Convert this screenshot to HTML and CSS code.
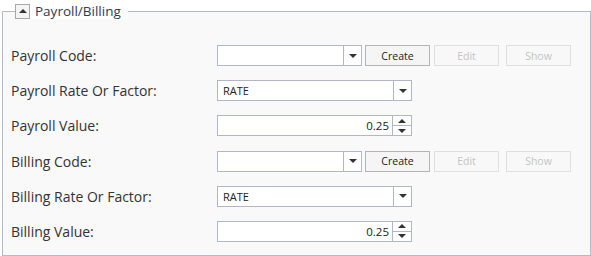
FILE: index.html
```html
<!DOCTYPE html>
<html lang="en">
<head>
  <meta charset="UTF-8" />
  <title>Payroll/Billing</title>
  <link rel="stylesheet" href="styles.css">
</head>
<body>
  <fieldset class="group">
    <legend>
      <span class="toggle"><span class="tri-up"></span></span>
      <span class="legend-text">Payroll/Billing</span>
    </legend>

    <div class="rows">
      <div class="row">
        <label>Payroll Code:</label>
        <div class="combo code">
          <span class="combo-value"></span>
          <span class="combo-btn"><span class="tri-down"></span></span>
        </div>
        <button class="btn">Create</button>
        <button class="btn" disabled>Edit</button>
        <button class="btn" disabled>Show</button>
      </div>

      <div class="row">
        <label>Payroll Rate Or Factor:</label>
        <div class="combo wide">
          <span class="combo-value">RATE</span>
          <span class="combo-btn"><span class="tri-down"></span></span>
        </div>
      </div>

      <div class="row">
        <label>Payroll Value:</label>
        <div class="spinner">
          <span class="spin-value">0.25</span>
          <span class="spin-btns">
            <span class="spin-up"><span class="tri-up"></span></span>
            <span class="spin-down"><span class="tri-down"></span></span>
          </span>
        </div>
      </div>

      <div class="row">
        <label>Billing Code:</label>
        <div class="combo code">
          <span class="combo-value"></span>
          <span class="combo-btn"><span class="tri-down"></span></span>
        </div>
        <button class="btn">Create</button>
        <button class="btn" disabled>Edit</button>
        <button class="btn" disabled>Show</button>
      </div>

      <div class="row">
        <label>Billing Rate Or Factor:</label>
        <div class="combo wide">
          <span class="combo-value">RATE</span>
          <span class="combo-btn"><span class="tri-down"></span></span>
        </div>
      </div>

      <div class="row">
        <label>Billing Value:</label>
        <div class="spinner">
          <span class="spin-value">0.25</span>
          <span class="spin-btns">
            <span class="spin-up"><span class="tri-up"></span></span>
            <span class="spin-down"><span class="tri-down"></span></span>
          </span>
        </div>
      </div>
    </div>
  </fieldset>
</body>
</html>
```

FILE: styles.css
```css
* {
  box-sizing: border-box;
}

body {
  margin: 0;
  padding: 3px 0 0 2px;
  background: #fff;
  font-family: 'Open Sans', sans-serif;
  color: #333;
  width: 591px;
  height: 256px;
}

.group {
  width: 589px;
  height: 253px;
  margin: 0;
  padding: 0 10px 12px 10px;
  border: 1px solid #b6b9ca;
  background: #f9f9f9;
}

.group legend {
  display: flex;
  align-items: center;
  padding: 0 7px 0 0;
  margin-left: 2px;
  background: #fff;
  height: 16px;
}

.toggle {
  width: 15px;
  height: 15px;
  border: 1px solid #a8a8a8;
  background: #f4f4f4;
  display: flex;
  align-items: center;
  justify-content: center;
  margin-right: 5px;
}

.legend-text {
  font-size: 13.5px;
  color: #2f3b55;
  line-height: 16px;
}

.tri-up {
  width: 0;
  height: 0;
  border-left: 4px solid transparent;
  border-right: 4px solid transparent;
  border-bottom: 4px solid #333;
}

.tri-down {
  width: 0;
  height: 0;
  border-left: 4px solid transparent;
  border-right: 4px solid transparent;
  border-top: 4px solid #333;
}

.rows {
  display: flex;
  flex-direction: column;
  gap: 14.2px;
  padding-top: 26px;
  margin-left: -2px;
}

.row {
  display: flex;
  align-items: center;
  height: 21px;
}

.row label {
  width: 206px;
  font-size: 14px;
  color: #333;
}

.combo, .spinner {
  display: flex;
  height: 21px;
  border: 1px solid #b3b6cb;
  background: #fff;
}

.combo.code {
  width: 145px;
}

.combo.wide, .spinner {
  width: 195px;
}

.combo-value {
  flex: 1;
  font-size: 11px;
  line-height: 19px;
  padding-left: 5px;
  color: #222;
}

.combo-btn {
  width: 18px;
  border-left: 1px solid #b3b6cb;
  display: flex;
  align-items: center;
  justify-content: center;
}

.spin-value {
  flex: 1;
  text-align: right;
  font-size: 11.5px;
  line-height: 19px;
  padding-right: 3px;
  color: #222;
}

.spin-btns {
  width: 19px;
  border-left: 1px solid #b3b6cb;
  display: flex;
  flex-direction: column;
}

.spin-up, .spin-down {
  flex: 1;
  display: flex;
  align-items: center;
  justify-content: center;
}

.spin-up {
  border-bottom: 1px solid #b3b6cb;
}

.btn {
  height: 21px;
  width: 65px;
  margin-left: 3px;
  font-family: 'Open Sans', sans-serif;
  font-size: 10.5px;
  color: #222;
  background: #f5f5f5;
  border: 1px solid #b4b4b4;
  padding: 0;
}

.btn + .btn {
  margin-left: 4px;
}

.btn:disabled {
  color: #c4c4c4;
  border-color: #e0e0e0;
  background: #f8f8f8;
}

.btn:disabled + .btn:disabled {
  margin-left: 7px;
}
```
